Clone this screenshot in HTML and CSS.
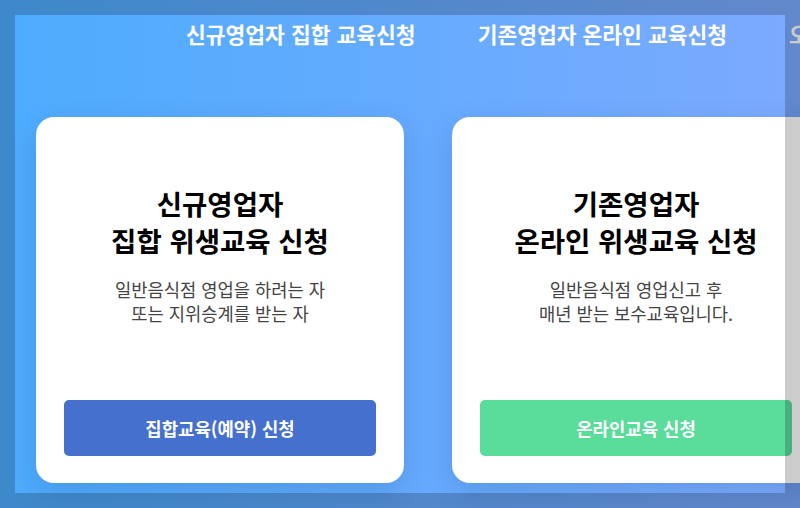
FILE: index.html
```html
<!DOCTYPE html>
<html lang="ko">
<head>
    <meta charset="UTF-8">
    <meta name="viewport" content="width=device-width, initial-scale=1.0">
    <title>위생교육 신청</title>
    <link rel="stylesheet" href="styles.css">
</head>
<body>
    <div class="page">
        <nav class="top-menu">
            <a href="#">신규영업자 집합 교육신청</a>
            <a href="#">기존영업자 온라인 교육신청</a>
            <a href="#">오프라인 교육 안내</a>
        </nav>

        <div class="card-list">
            <div class="card">
                <h2>신규영업자<br>집합 위생교육 신청</h2>
                <p>일반음식점 영업을 하려는 자<br>또는 지위승계를 받는 자</p>
                <button class="btn btn-blue">집합교육(예약) 신청</button>
            </div>
            <div class="card">
                <h2>기존영업자<br>온라인 위생교육 신청</h2>
                <p>일반음식점 영업신고 후<br>매년 받는 보수교육입니다.</p>
                <button class="btn btn-green">온라인교육 신청</button>
            </div>
        </div>

        <!-- 선택 영역 하이라이트 -->
        <div class="focus-frame"></div>
    </div>
</body>
</html>
```

FILE: styles.css
```css
html, body {
    margin: 0;
    height: 100%;
    overflow: hidden;
}
body {
    font-family: "Noto Sans CJK KR", "Noto Sans", sans-serif;
    background: linear-gradient(to right, #4dacfe 0%, #7caaff 100%);
}
.page {
    position: relative;
    width: 800px;
    height: 508px;
    overflow: hidden;
}
.top-menu {
    display: flex;
    align-items: center;
    gap: 62px;
    height: 66px;
    padding-left: 186px;
    white-space: nowrap;
}
.top-menu a {
    color: white;
    font-size: 21.5px;
    font-weight: bold;
    text-decoration: none;
}
.card-list {
    display: flex;
    gap: 48px;
    padding: 51px 0 0 36px;
}
.card {
    flex: none;
    width: 368px;
    height: 366px;
    box-sizing: border-box;
    padding: 68px 28px 27px;
    background-color: white;
    border-radius: 18px;
    box-shadow: 0 10px 30px rgba(0, 40, 90, 0.15);
    display: flex;
    flex-direction: column;
    text-align: center;
}
.card h2 {
    margin: 0;
    font-size: 27.5px;
    line-height: 37px;
    color: black;
}
.card p {
    margin: 18px 0 0;
    font-size: 17.7px;
    line-height: 24px;
    color: #444;
}
.btn {
    margin-top: auto;
    height: 56px;
    border: none;
    border-radius: 5px;
    color: white;
    font-family: inherit;
    font-size: 17.8px;
    font-weight: bold;
    cursor: pointer;
}
.btn-blue {
    background-color: #4570cd;
}
.btn-green {
    background-color: #5adc9b;
}
.focus-frame {
    position: absolute;
    left: 15px;
    top: 15px;
    width: 770px;
    height: 478px;
    box-shadow: 0 0 0 800px rgba(0, 0, 0, 0.2);
    pointer-events: none;
}
```
